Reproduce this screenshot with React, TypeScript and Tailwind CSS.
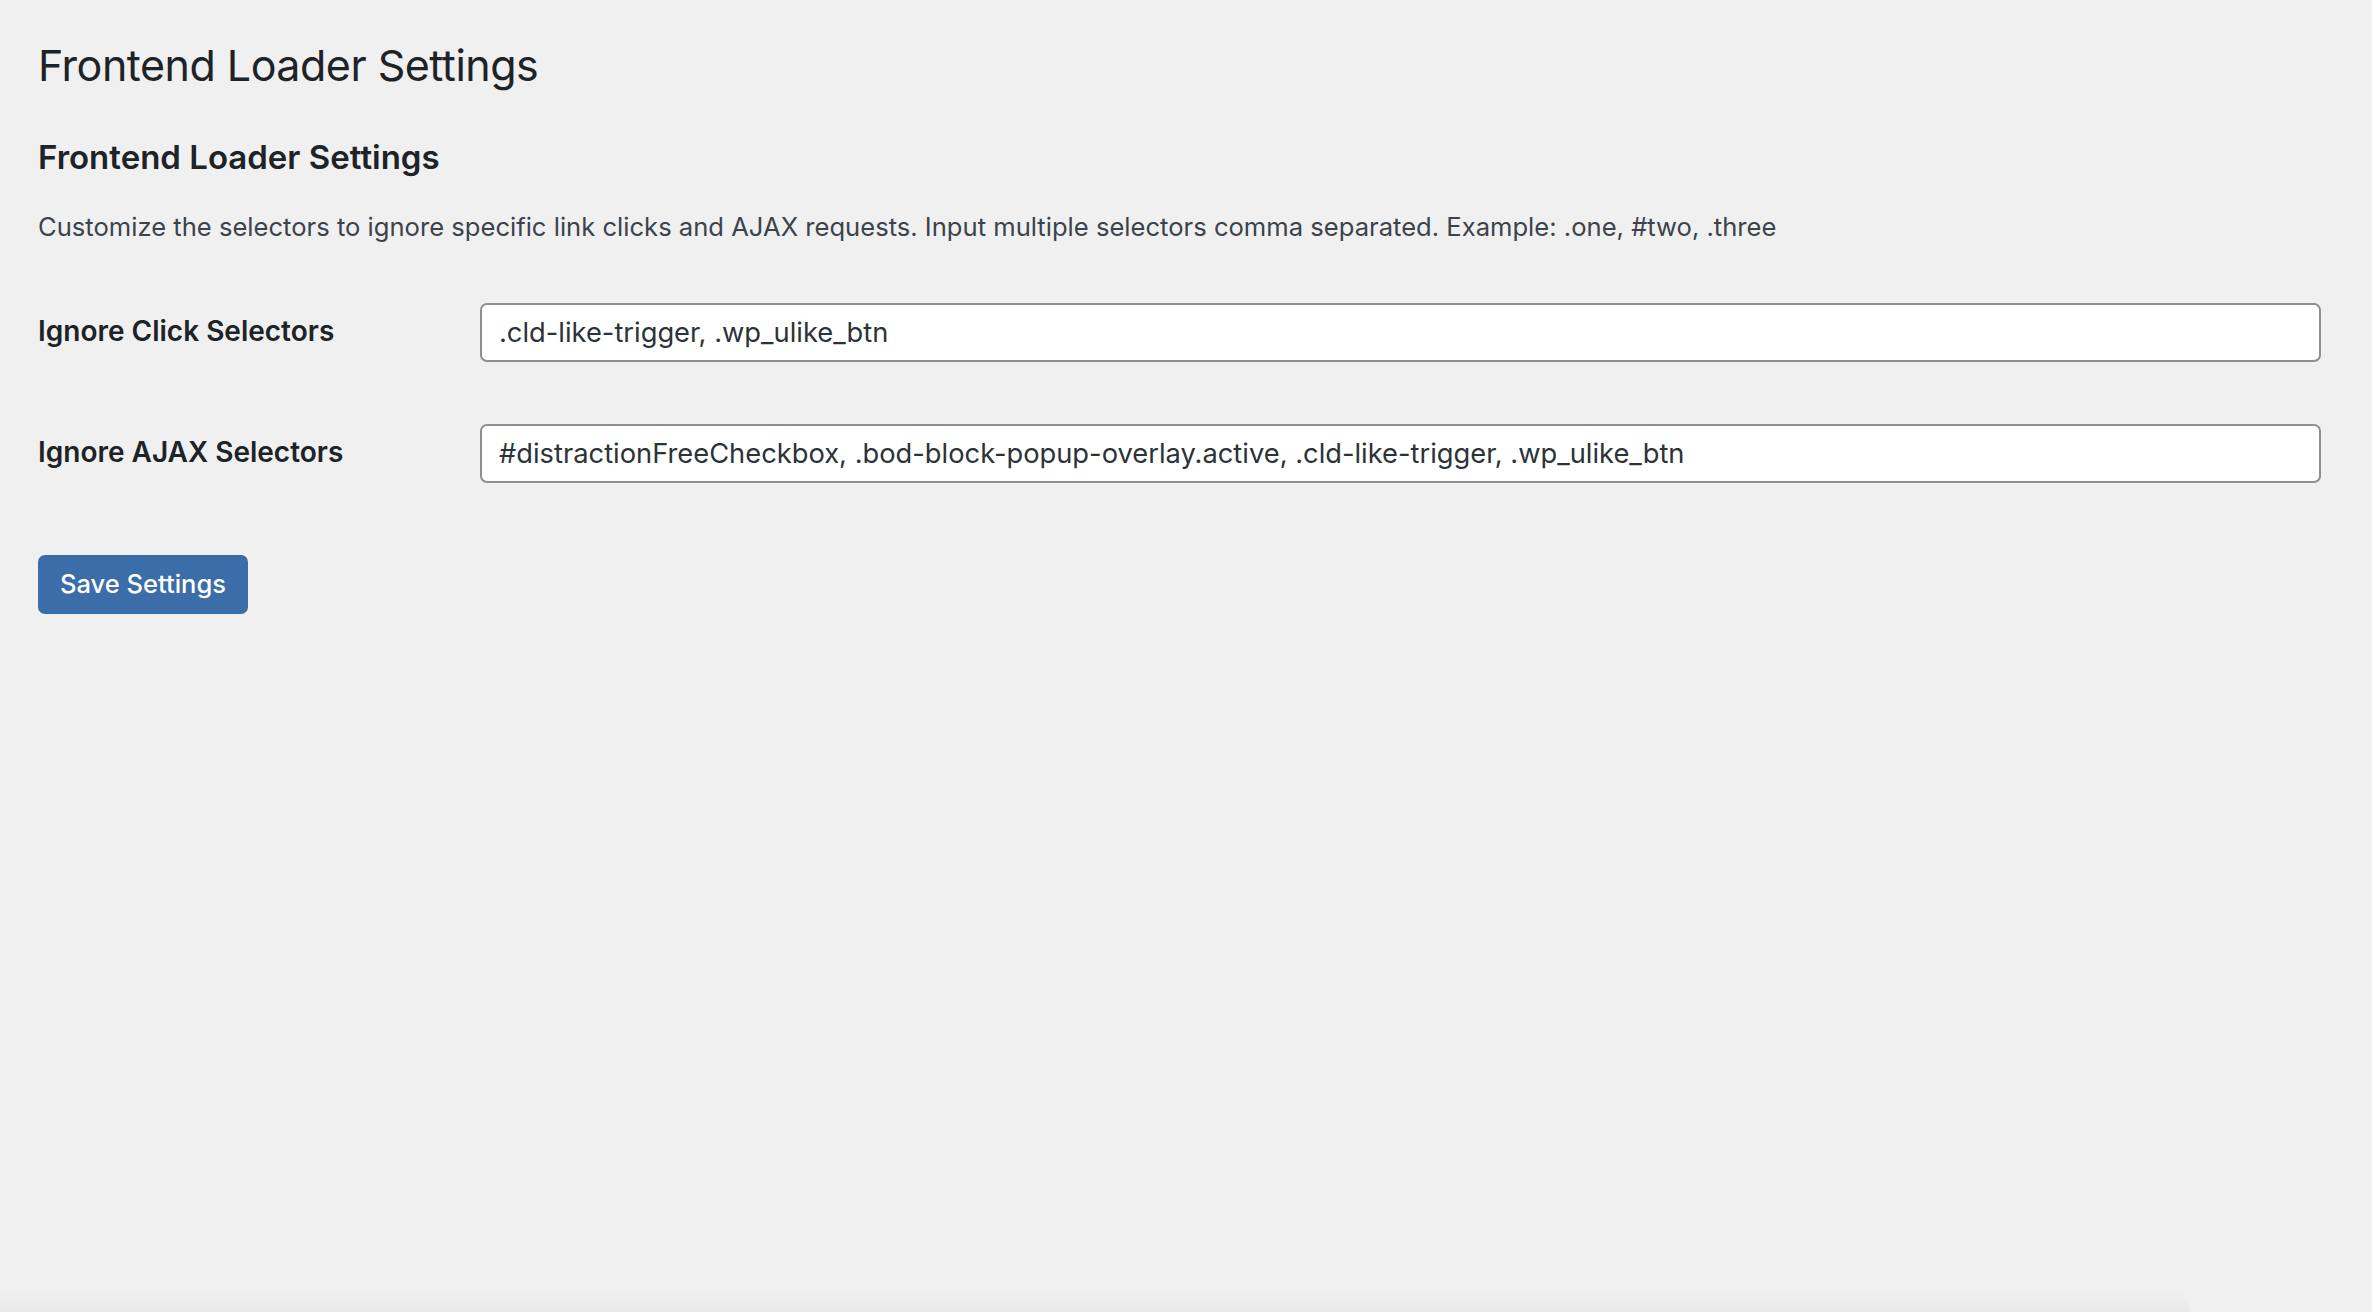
import React from "react";

export default function App() {
  return (
    <div
      className="min-h-screen flex flex-col bg-[#f0f0f1] text-[#1d2327]"
      style={{ fontFamily: "Inter, 'Noto Sans', sans-serif" }}
    >
      <div className="flex-1 pl-[38px] pr-[51px] pt-[35px]">
        <h1 className="text-[43px] leading-[60px] font-normal tracking-[-0.5px]">Frontend Loader Settings</h1>
        <h2 className="mt-[32px] text-[33px] leading-[60px] font-semibold">Frontend Loader Settings</h2>
        <p className="mt-[22px] text-[25.6px] leading-[36px] text-[#3c434a]">
          Customize the selectors to ignore specific link clicks and AJAX requests. Input multiple selectors comma separated. Example: .one, #two, .three
        </p>
        <div className="mt-[58px] flex flex-col gap-[62px]">
          <div className="flex items-center">
            <label className="w-[442px] shrink-0 text-[28px] font-semibold leading-[40px] -mt-[3px]">Ignore Click Selectors</label>
            <input
              readOnly
              value=".cld-like-trigger, .wp_ulike_btn"
              className="flex-1 h-[59px] bg-white border-2 border-[#8c8f94] rounded-[7px] px-[17px] text-[27.3px] text-[#2c3338] outline-none"
              style={{ fontFamily: "Inter, 'Noto Sans', sans-serif" }}
            />
          </div>
          <div className="flex items-center">
            <label className="w-[442px] shrink-0 text-[28px] font-semibold leading-[40px] -mt-[3px]">Ignore AJAX Selectors</label>
            <input
              readOnly
              value="#distractionFreeCheckbox, .bod-block-popup-overlay.active, .cld-like-trigger, .wp_ulike_btn"
              className="flex-1 h-[59px] bg-white border-2 border-[#8c8f94] rounded-[7px] px-[17px] text-[27.3px] text-[#2c3338] outline-none"
              style={{ fontFamily: "Inter, 'Noto Sans', sans-serif" }}
            />
          </div>
        </div>
        <button className="mt-[72px] h-[59px] w-[210px] rounded-[7px] bg-[#3b6ea9] text-white text-[25.5px] font-medium">
          Save Settings
        </button>
      </div>
      <div className="h-[22px] w-[2190px] rounded-tr-[30px] bg-gradient-to-b from-[#f0f0f1] to-[#e9e9ea]" />
    </div>
  );
}
